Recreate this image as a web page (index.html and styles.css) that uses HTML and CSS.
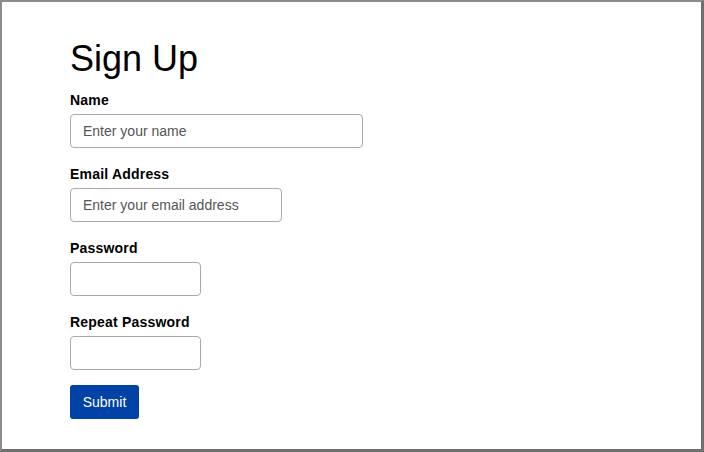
FILE: index.html
```html
<!DOCTYPE html>
<html lang="en">
<head>
<meta charset="utf-8">
<title>Sign Up</title>
<link rel="stylesheet" href="styles.css">
</head>
<body>
<main class="frame">
  <h1 class="title">Sign Up</h1>
  <form class="form">
    <div class="field">
      <label class="label" for="name">Name</label>
      <input class="input input-name" id="name" type="text" placeholder="Enter your name">
    </div>
    <div class="field">
      <label class="label" for="email">Email Address</label>
      <input class="input input-email" id="email" type="email" placeholder="Enter your email address">
    </div>
    <div class="field">
      <label class="label" for="password">Password</label>
      <input class="input input-short" id="password" type="password">
    </div>
    <div class="field">
      <label class="label" for="repeat">Repeat Password</label>
      <input class="input input-short" id="repeat" type="password">
    </div>
    <button class="submit" type="button">Submit</button>
  </form>
</main>
</body>
</html>
```
FILE: styles.css
```css
html, body {
  margin: 0;
  padding: 0;
  background: #ffffff;
}
body {
  font-family: "Liberation Sans", Arial, sans-serif;
  color: #000;
}
.frame {
  box-sizing: border-box;
  width: 704px;
  height: 452px;
  border-style: solid;
  border-color: #8c8c8c #707070 #707070 #8c8c8c;
  border-width: 2px 3px 3px 2px;
  padding: 36px 0 0 68px;
  display: flex;
  flex-direction: column;
}
.title {
  margin: 0 0 13px 0;
  font-size: 36px;
  line-height: 41px;
  font-weight: normal;
}
.form {
  display: flex;
  flex-direction: column;
  align-items: flex-start;
}
.field {
  display: flex;
  flex-direction: column;
  align-items: flex-start;
  margin-bottom: 18px;
}
.field:last-of-type {
  margin-bottom: 15px;
}
.label {
  font-size: 14px;
  line-height: 16px;
  font-weight: bold;
  letter-spacing: 0.2px;
  margin-bottom: 6px;
}
.input {
  box-sizing: border-box;
  height: 34px;
  border: 1px solid #a9a9a9;
  border-radius: 4px;
  padding: 0 12px;
  font-family: "Liberation Sans", Arial, sans-serif;
  font-size: 14px;
  color: #333;
  background: #fff;
  outline: none;
}
.input::placeholder {
  color: #555;
  opacity: 1;
}
.input-name { width: 293px; }
.input-email { width: 212px; }
.input-short { width: 131px; }
.submit {
  box-sizing: border-box;
  width: 69px;
  height: 34px;
  border: none;
  border-radius: 3px;
  background: #0042a6;
  color: #fff;
  font-family: "Liberation Sans", Arial, sans-serif;
  font-size: 14px;
  padding: 0;
  cursor: pointer;
}
```
